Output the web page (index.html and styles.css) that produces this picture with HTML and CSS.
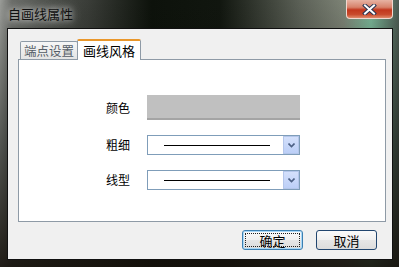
FILE: index.html
```html
<!DOCTYPE html>
<html lang="zh-CN">
<head>
    <meta charset="UTF-8">
    <title>自画线属性</title>
    <link rel="stylesheet" href="styles.css">
</head>
<body>
    <div class="window">
        <div class="titlebar">
            <span class="title">自画线属性</span>
            <div class="close-btn">
                <svg width="15" height="11" viewBox="0 0 15 11">
                    <path d="M3 1.5 L12 9.5 M12 1.5 L3 9.5" stroke="#2a3550" stroke-width="4" stroke-linecap="square"/>
                    <path d="M3 1.5 L12 9.5 M12 1.5 L3 9.5" stroke="#ffffff" stroke-width="2" stroke-linecap="square"/>
                </svg>
            </div>
        </div>

        <div class="client">
            <div class="tabs">
                <div class="tab">端点设置</div>
                <div class="tab active">画线风格</div>
            </div>

            <div class="panel">
                <div class="form">
                    <span class="label">颜色</span>
                    <div class="swatch"></div>

                    <span class="label">粗细</span>
                    <div class="combo">
                        <div class="combo-value"><div class="sample-line"></div></div>
                        <div class="combo-arrow">
                            <svg width="7" height="5" viewBox="0 0 7 5">
                                <path d="M0.5 0.5 L3.5 3.5 L6.5 0.5" fill="none" stroke="#4d6185" stroke-width="1.6"/>
                            </svg>
                        </div>
                    </div>

                    <span class="label">线型</span>
                    <div class="combo">
                        <div class="combo-value"><div class="sample-line"></div></div>
                        <div class="combo-arrow">
                            <svg width="7" height="5" viewBox="0 0 7 5">
                                <path d="M0.5 0.5 L3.5 3.5 L6.5 0.5" fill="none" stroke="#4d6185" stroke-width="1.6"/>
                            </svg>
                        </div>
                    </div>
                </div>
            </div>

            <div class="buttons">
                <button class="btn default"><span>确定</span></button>
                <button class="btn">取消</button>
            </div>
        </div>
    </div>
</body>
</html>
```

FILE: styles.css
```css
body {
    margin: 0;
    font-family: "Noto Sans CJK SC", "DejaVu Sans", sans-serif;
    font-size: 12px;
    background-color: #ffffff;
}

.window {
    width: 399px;
    height: 267px;
    display: flex;
    flex-direction: column;
    box-sizing: border-box;
    background:
        linear-gradient(to bottom, rgba(0, 0, 0, 0) 0%, rgba(10, 12, 8, 0.5) 55%, rgba(20, 16, 10, 0.9) 100%),
        linear-gradient(to right, #9a9c98 0%, #6a6c68 3%, #4e514c 12%, #3a3d38 22%, #0d120b 38%, #11160f 55%, #5b6056 75%, #7c8275 86%, #79b596 93%, #4d5a52 100%);
}

.titlebar {
    height: 28px;
    display: flex;
    justify-content: space-between;
    align-items: flex-start;
}

.title {
    margin: 6px 0 0 8px;
    font-size: 13px;
    line-height: 16px;
    color: #101010;
    text-shadow: 0 0 6px rgba(255, 255, 255, 0.8), 0 0 12px rgba(220, 220, 220, 0.7);
}

.close-btn {
    width: 45px;
    height: 18px;
    margin-right: 6px;
    display: flex;
    justify-content: center;
    align-items: center;
    border: 1px solid #f0d8d0;
    border-top: none;
    border-radius: 0 0 4px 4px;
    background: linear-gradient(to bottom, #e7b3a3 0%, #d7826b 40%, #c2371d 55%, #c84a2c 80%, #df8a6a 100%);
}

.client {
    flex: 1;
    margin: 0 6px 7px 7px;
    display: flex;
    flex-direction: column;
    padding: 10px 6px 9px 10px;
    border: 1px solid #101010;
    background-color: #f0f0f0;
}

.tabs {
    height: 20px;
    display: flex;
    align-items: flex-end;
    padding-left: 2px;
}

.tab {
    width: 58px;
    height: 18px;
    box-sizing: border-box;
    text-align: center;
    line-height: 17px;
    font-size: 12.5px;
    color: #555d66;
    border: 1px solid #8e9aa6;
    border-bottom: none;
    border-radius: 2px 2px 0 0;
    background: linear-gradient(to bottom, #f6f6f6, #e4e4e4);
}

.tab.active {
    width: 64px;
    height: 21px;
    margin-left: -1px;
    margin-bottom: -1px;
    line-height: 19px;
    font-size: 13px;
    color: #000000;
    border-top: 2px solid #e9972b;
    background: #ffffff;
    position: relative;
    z-index: 1;
}

.panel {
    height: 163px;
    box-sizing: border-box;
    border: 1px solid #8e9aa6;
    background-color: #ffffff;
    padding: 35px 0 0 87px;
}

.form {
    display: grid;
    grid-template-columns: 41px 153px;
    grid-template-rows: 25px 20px 20px;
    row-gap: 15px;
    align-items: center;
}

.label {
    color: #000000;
    line-height: 14px;
}

.swatch {
    height: 25px;
    box-sizing: border-box;
    background-color: #c0c0c0;
    border-bottom: 2px solid #a4a4a4;
}

.combo {
    height: 20px;
    box-sizing: border-box;
    display: flex;
    border: 1px solid #7f9db9;
    background-color: #ffffff;
}

.combo-value {
    flex: 1;
    display: flex;
    align-items: center;
    padding-left: 16px;
}

.sample-line {
    width: 106px;
    height: 1px;
    background-color: #000000;
}

.combo-arrow {
    width: 14px;
    display: flex;
    justify-content: center;
    align-items: center;
    border: 1px solid #b4c6ea;
    background: linear-gradient(to bottom, #d4e0fb, #bccff7);
}

.buttons {
    margin-top: 8px;
    display: flex;
    justify-content: flex-end;
    gap: 13px;
    padding-right: 9px;
}

.btn {
    width: 61px;
    height: 20px;
    padding: 0;
    font-family: inherit;
    font-size: 13px;
    color: #000000;
    border: 1px solid #22466f;
    border-radius: 3px;
    background: linear-gradient(to bottom, #fafafa 0%, #f0f0f0 50%, #e6e6e6 51%, #dcdcdc 100%);
    display: flex;
    justify-content: center;
    align-items: center;
}

.btn.default {
    border-color: #3c7fb1;
    box-shadow: inset 0 0 0 1px #a8d8f8;
}

.btn.default span {
    width: 55px;
    height: 14px;
    line-height: 14px;
    border: 1px dotted #202020;
    box-sizing: border-box;
}
```
